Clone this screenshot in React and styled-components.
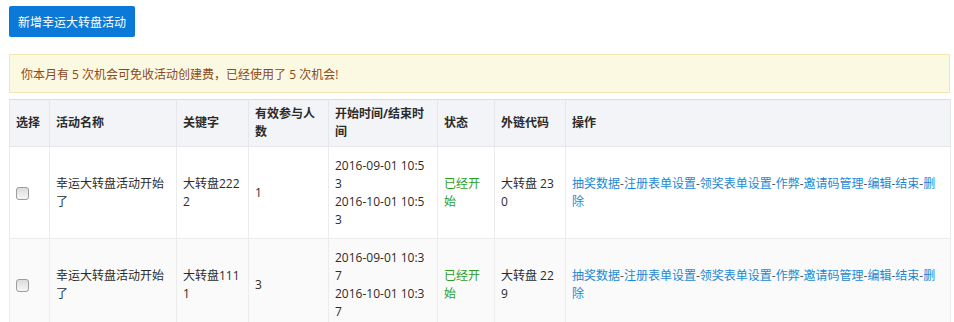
import React from 'react';
import styled, { createGlobalStyle } from 'styled-components';

const GlobalStyle = createGlobalStyle`
  *, *::before, *::after {
    box-sizing: border-box;
  }
  body {
    margin: 0;
    background: #fff;
    font-family: "Open Sans", "Noto Sans CJK SC", sans-serif;
    font-size: 12px;
    color: #333;
  }
`;

const Page = styled.div`
  padding: 6px 4px 0 9px;
  display: flex;
  flex-direction: column;
  align-items: flex-start;
`;

const AddButton = styled.button`
  height: 31px;
  padding: 0 9px;
  border: 0;
  border-radius: 2px;
  background: #0a79d8;
  color: #fff;
  font-family: inherit;
  font-size: 12px;
  cursor: pointer;
`;

const Alert = styled.div`
  align-self: stretch;
  margin-top: 17px;
  height: 39px;
  display: flex;
  align-items: center;
  padding: 0 11px;
  border: 1px solid #f3e6b3;
  background: #fcf9e3;
  color: #8a4a1a;
`;

const Table = styled.table`
  margin-top: 6px;
  width: 941px;
  table-layout: fixed;
  border-collapse: collapse;
  line-height: 18px;
`;

const Th = styled.th`
  width: ${p => p.$w}px;
  padding: 5px 6px;
  background: #f3f4f8;
  border: 1px solid #e6e7eb;
  border-top-color: #dcdcdc;
  text-align: left;
  font-weight: bold;
  color: #2b2b2b;
  word-break: break-all;
`;

const Row = styled.tr`
  background: ${p => (p.$striped ? '#fafafa' : '#fff')};
`;

const Td = styled.td`
  padding: 10px 7px 9px 6px;
  border: 1px solid #ececec;
  vertical-align: middle;
  word-break: break-all;
  color: ${p => p.$color || '#2b2b2b'};
`;

const Check = styled.span`
  display: block;
  width: 13px;
  height: 13px;
  border: 1px solid #9c9c9c;
  border-radius: 3px;
  background: linear-gradient(#dcdcdc, #f6f6f6);
`;

const Link = styled.a`
  color: #1a88d5;
  text-decoration: none;
`;

const Sep = styled.span`
  color: #555;
`;

const columns = [
  { title: '选择', w: 40 },
  { title: '活动名称', w: 127 },
  { title: '关键字', w: 72 },
  { title: '有效参与人数', w: 80 },
  { title: '开始时间/结束时间', w: 109 },
  { title: '状态', w: 57 },
  { title: '外链代码', w: 71 },
  { title: '操作', w: 385 },
];

const actions = ['抽奖数据', '注册表单设置', '领奖表单设置', '作弊', '邀请码管理', '编辑', '结束', '删除'];

const rows = [
  { name: '幸运大转盘活动开始了', key: '大转盘2222', count: 1, start: '2016-09-01 10:53', end: '2016-10-01 10:53', code: '大转盘 230' },
  { name: '幸运大转盘活动开始了', key: '大转盘1111', count: 3, start: '2016-09-01 10:37', end: '2016-10-01 10:37', code: '大转盘 229' },
];

export default function App() {
  return (
    <Page>
      <GlobalStyle />
      <AddButton>新增幸运大转盘活动</AddButton>
      <Alert>你本月有 5 次机会可免收活动创建费，已经使用了 5 次机会!</Alert>
      <Table>
        <thead>
          <tr>
            {columns.map(c => (
              <Th key={c.title} $w={c.w}>{c.title}</Th>
            ))}
          </tr>
        </thead>
        <tbody>
          {rows.map((r, i) => (
            <Row key={r.key} $striped={i % 2 === 1}>
              <Td><Check /></Td>
              <Td>{r.name}</Td>
              <Td>{r.key}</Td>
              <Td>{r.count}</Td>
              <Td>{r.start}<br />{r.end}</Td>
              <Td $color="#2f9e1f">已经开始</Td>
              <Td>{r.code}</Td>
              <Td>
                {actions.map((a, j) => (
                  <React.Fragment key={a}>
                    {j > 0 && <Sep>-</Sep>}
                    <Link href="#">{a}</Link>
                  </React.Fragment>
                ))}
              </Td>
            </Row>
          ))}
        </tbody>
      </Table>
    </Page>
  );
}
